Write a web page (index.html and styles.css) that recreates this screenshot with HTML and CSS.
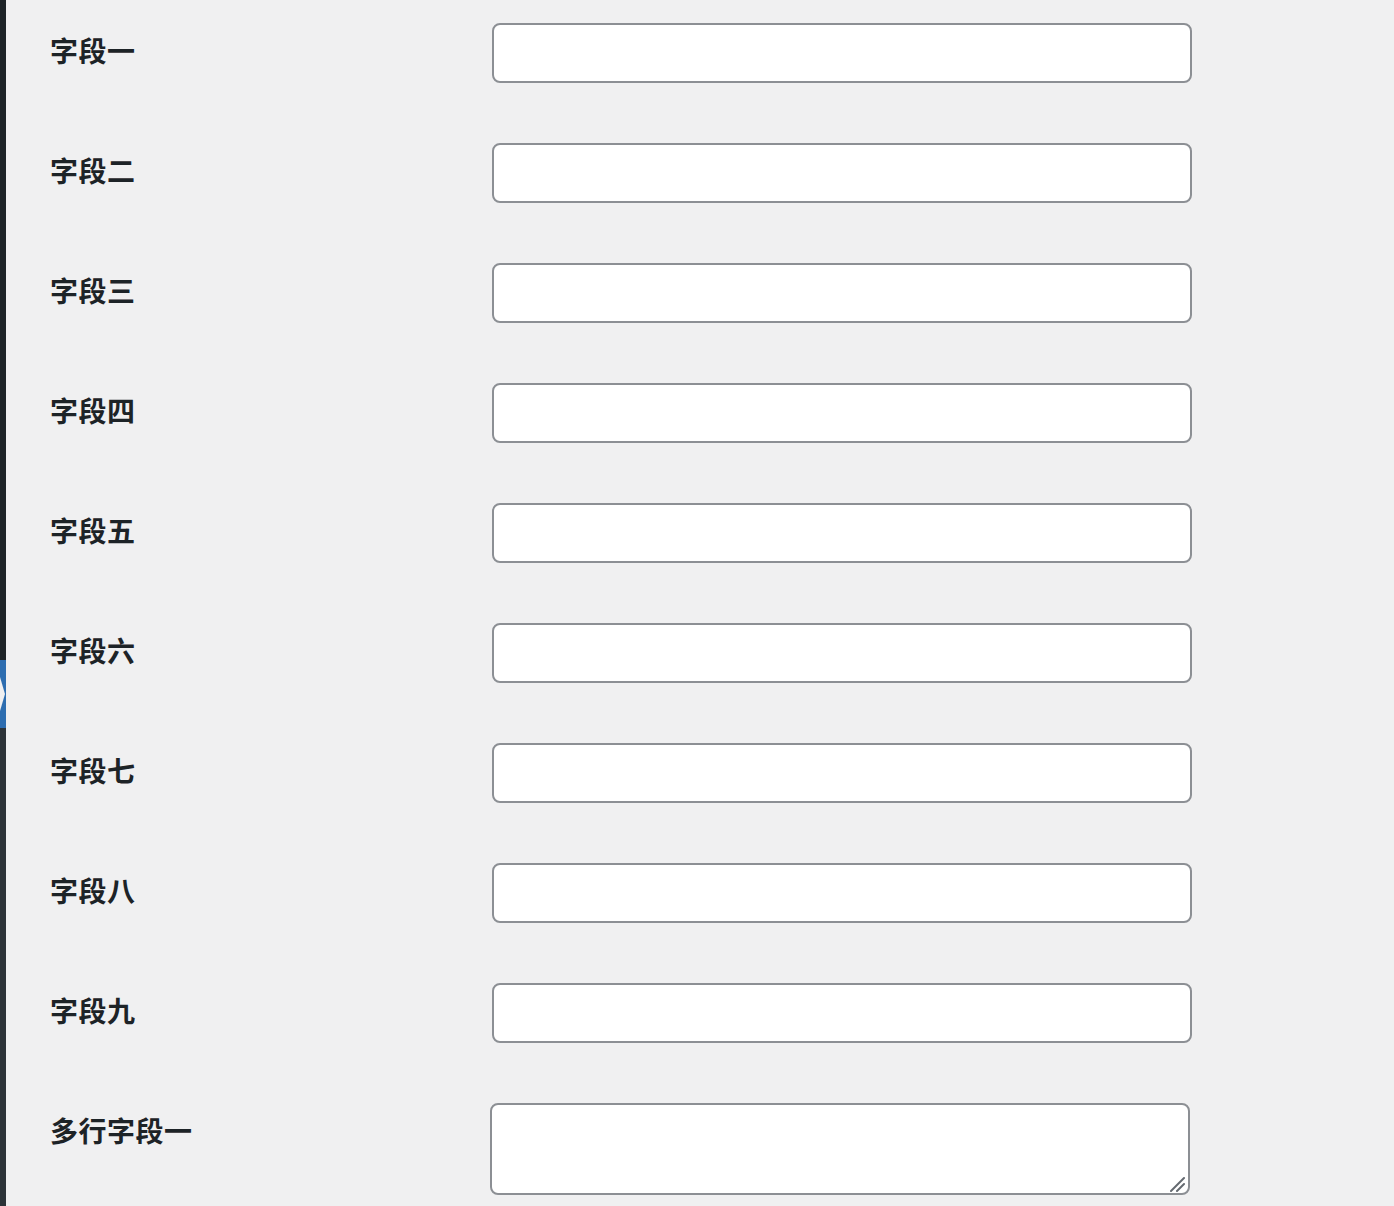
FILE: index.html
```html
<!DOCTYPE html>
<html lang="zh-CN">
<head>
  <meta charset="UTF-8" />
  <meta name="viewport" content="width=device-width, initial-scale=1.0"/>
  <title>字段设置</title>
  <link rel="stylesheet" href="styles.css">
</head>
<body>

  <div class="adminbar">
    <div class="menu-top"></div>
    <div class="menu-current"><span class="menu-arrow"></span></div>
    <div class="menu-rest"></div>
  </div>

  <div class="wrap">
    <table class="form-table">
      <tr><th><label for="f1">字段一</label></th><td><input type="text" id="f1" class="regular-text"></td></tr>
      <tr><th><label for="f2">字段二</label></th><td><input type="text" id="f2" class="regular-text"></td></tr>
      <tr><th><label for="f3">字段三</label></th><td><input type="text" id="f3" class="regular-text"></td></tr>
      <tr><th><label for="f4">字段四</label></th><td><input type="text" id="f4" class="regular-text"></td></tr>
      <tr><th><label for="f5">字段五</label></th><td><input type="text" id="f5" class="regular-text"></td></tr>
      <tr><th><label for="f6">字段六</label></th><td><input type="text" id="f6" class="regular-text"></td></tr>
      <tr><th><label for="f7">字段七</label></th><td><input type="text" id="f7" class="regular-text"></td></tr>
      <tr><th><label for="f8">字段八</label></th><td><input type="text" id="f8" class="regular-text"></td></tr>
      <tr><th><label for="f9">字段九</label></th><td><input type="text" id="f9" class="regular-text"></td></tr>
      <tr class="multi">
        <th><label for="t1">多行字段一</label></th>
        <td>
          <div class="textarea-box">
            <textarea id="t1" class="large-text"></textarea>
            <svg class="grip" width="16" height="16" viewBox="0 0 16 16">
              <line x1="1" y1="15" x2="14" y2="2" stroke="#646970" stroke-width="2" stroke-linecap="round"/>
              <line x1="7" y1="15" x2="14" y2="8" stroke="#646970" stroke-width="2" stroke-linecap="round"/>
            </svg>
          </div>
        </td>
      </tr>
    </table>
  </div>

</body>
</html>
```

FILE: styles.css
```css
html, body {
  margin: 0;
  height: 100%;
}

body {
  display: flex;
  background-color: #f0f0f1;
  font-family: "Noto Sans CJK SC", "Noto Sans", sans-serif;
  color: #1d2327;
  overflow: hidden;
}

/* admin menu sliver on the left */
.adminbar {
  width: 6px;
  flex-shrink: 0;
  display: flex;
  flex-direction: column;
  height: 1206px;
}
.menu-top {
  height: 660px;
  background-color: #1d2327;
}
.menu-current {
  position: relative;
  height: 68px;
  background-color: #2d6db0;
}
.menu-arrow {
  position: absolute;
  left: 0;
  top: 17px;
  width: 0;
  height: 0;
  border-top: 17px solid transparent;
  border-bottom: 17px solid transparent;
  border-left: 5px solid #f0f0f1;
}
.menu-rest {
  flex: 1;
  background-color: #2c3338;
}

.wrap {
  padding: 23px 0 0 44px;
}

.form-table {
  border-collapse: collapse;
}
.form-table th,
.form-table td {
  padding: 0 0 60px 0;
  vertical-align: top;
}
.form-table th {
  width: 442px;
  text-align: left;
  padding-top: 13px;
}
.form-table label {
  font-size: 28px;
  line-height: 28px;
  font-weight: 600;
  letter-spacing: 0.5px;
}

.regular-text {
  box-sizing: border-box;
  display: block;
  width: 700px;
  height: 60px;
  margin: 0;
  padding: 0 16px;
  font-size: 28px;
  background: #fff;
  border: 2px solid #8c8f94;
  border-radius: 8px;
}

.textarea-box {
  position: relative;
  width: 700px;
  margin-left: -2px;
}
.large-text {
  box-sizing: border-box;
  display: block;
  width: 700px;
  height: 92px;
  margin: 0;
  padding: 4px 16px;
  font-size: 28px;
  background: #fff;
  border: 2px solid #8c8f94;
  border-radius: 8px;
  resize: none;
}
.grip {
  position: absolute;
  right: 4px;
  bottom: 3px;
}
```
